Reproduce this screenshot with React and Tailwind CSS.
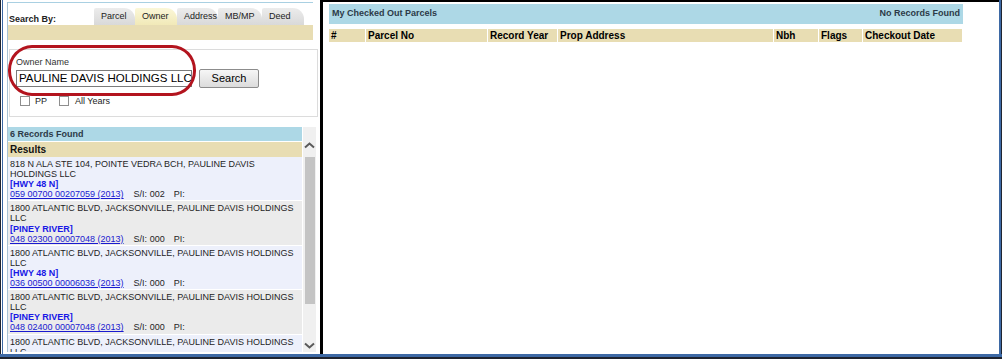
import React from 'react';

// Owner search results shown in the left list
const results = [
  {
    addr: '818 N ALA STE 104, POINTE VEDRA BCH, PAULINE DAVIS HOLDINGS LLC',
    area: '[HWY 48 N]',
    parcel: '059 00700 00207059 (2013)',
    si: '002',
  },
  {
    addr: '1800 ATLANTIC BLVD, JACKSONVILLE, PAULINE DAVIS HOLDINGS LLC',
    area: '[PINEY RIVER]',
    parcel: '048 02300 00007048 (2013)',
    si: '000',
  },
  {
    addr: '1800 ATLANTIC BLVD, JACKSONVILLE, PAULINE DAVIS HOLDINGS LLC',
    area: '[HWY 48 N]',
    parcel: '036 00500 00006036 (2013)',
    si: '000',
  },
  {
    addr: '1800 ATLANTIC BLVD, JACKSONVILLE, PAULINE DAVIS HOLDINGS LLC',
    area: '[PINEY RIVER]',
    parcel: '048 02400 00007048 (2013)',
    si: '000',
  },
  {
    addr: '1800 ATLANTIC BLVD, JACKSONVILLE, PAULINE DAVIS HOLDINGS LLC',
    area: '[HWY 48 N]',
    parcel: '036 00600 00006036 (2013)',
    si: '000',
  },
];

const tabs = [
  { label: 'Parcel', w: 'w-[41px]' },
  { label: 'Owner', w: 'w-[42px]', active: true },
  { label: 'Address', w: 'w-[41px]' },
  { label: 'MB/MP', w: 'w-[44px]' },
  { label: 'Deed', w: 'w-[42px]' },
];

const columns = [
  { label: '#', w: 'w-[36px]' },
  { label: 'Parcel No', w: 'w-[121px]' },
  { label: 'Record Year', w: 'w-[69px]' },
  { label: 'Prop Address', w: 'w-[215px]' },
  { label: 'Nbh', w: 'w-[44px]' },
  { label: 'Flags', w: 'w-[43px]' },
  { label: 'Checkout Date', w: 'w-[99px]' },
];

const Chevron = ({ down }) => (
  <svg width="11" height="7" viewBox="0 0 11 7" className="mx-auto">
    <path
      d={down ? 'M1 1.5 L5.5 5.5 L10 1.5' : 'M1 5.5 L5.5 1.5 L10 5.5'}
      fill="none"
      stroke="#5a5a5a"
      strokeWidth="2"
    />
  </svg>
);

export default function App() {
  return (
    <div className="w-[1002px] h-[359px] overflow-hidden bg-white flex flex-col font-['Liberation_Sans',Arial,sans-serif] text-[9px] text-[#1e1e1e]">
      <div className="flex h-[354px] shrink-0 overflow-hidden">
        {/* outer frame, left side */}
        <div className="w-px bg-[#1f2430]" />
        <div className="w-px bg-white" />
        <div className="w-px bg-[#3d69a5]" />

        {/* left search panel */}
        <div className="w-[317px] h-full pl-[4px] pt-[2px] pb-[2px] flex flex-col overflow-hidden">
          <div className="relative flex-1 min-h-0 flex flex-col border-l border-[#a7c2d4]">
            {/* Search By + tabs */}
            <div className="w-[305px] border-t border-[#a9d0e2]">
              <div className="h-[22px] flex items-end">
                <div className="w-[86px] pl-px pb-px leading-[10px] font-bold text-[#222]">Search By:</div>
                {tabs.map((t) => (
                  <div
                    key={t.label}
                    className={`${t.w} h-[17px] pl-[7px] pt-[3px] leading-[10px] rounded-tr-[11px] rounded-tl-[2px] ${
                      t.active
                        ? 'bg-gradient-to-b from-[#fbf7d8] to-[#f1e9b8] text-[#222]'
                        : 'bg-gradient-to-b from-[#ececec] to-[#d9d9d9] text-[#222]'
                    }`}
                  >
                    {t.label}
                  </div>
                ))}
              </div>
              <div className="h-[15px] bg-[#e8ddb3]" />
            </div>

            {/* owner name form */}
            <div className="ml-px mt-[9px] w-[309px] h-[68px] shrink-0 border border-[#dcdcdc] pl-[6px] pt-[7px]">
              <div className="leading-[10px] text-[#333]">Owner Name</div>
              <div className="mt-[2px] flex items-start">
                <div className="mt-px w-[176px] h-[17px] border border-[#7b7b7b] bg-white overflow-hidden whitespace-nowrap pl-[2px] text-[11.5px] leading-[15px] text-black">
                  PAULINE DAVIS HOLDINGS LLC
                </div>
                <div className="ml-[7px] w-[60px] h-[19px] border border-[#8c8c8c] rounded-[2px] bg-gradient-to-b from-[#f6f6f6] to-[#dcdcdc] text-[11px] leading-[17px] text-center text-black">
                  Search
                </div>
              </div>
              <div className="mt-[8px] flex items-center leading-[10px] text-[#222]">
                <div className="ml-[4px] w-[10px] h-[10px] border border-[#8e8e8e] bg-white" />
                <span className="ml-[5px]">PP</span>
                <div className="ml-[12px] w-[10px] h-[10px] border border-[#8e8e8e] bg-white" />
                <span className="ml-[6px]">All Years</span>
              </div>
            </div>

            {/* red annotation ring round the owner name */}
            <div className="absolute left-0 top-[43px] w-[188px] h-[51px] border-[3px] border-[#b3141e] rounded-[24px/25px]" />

            {/* results list */}
            <div className="mt-[10px] flex-1 min-h-0 flex overflow-hidden">
              <div className="w-[294px] flex flex-col overflow-hidden">
                <div className="h-[14px] shrink-0 bg-[#add8e6] pl-[2px] pt-[2px] leading-[10px] font-bold text-[#2c3a48]">
                  6 Records Found
                </div>
                <div className="mt-px h-[15px] shrink-0 bg-[#e8ddb3] pl-[2px] pt-[2px] leading-[11px] text-[10px] font-bold text-[#111]">
                  Results
                </div>
                {results.map((r, i) => (
                  <div
                    key={i}
                    className={`shrink-0 pl-[2px] pt-[2px] pb-px border-b border-white leading-[10.1px] ${
                      i % 2 === 0 ? 'bg-[#edf0fb]' : 'bg-[#ebebeb]'
                    }`}
                  >
                    <div>{r.addr}</div>
                    <div className="font-bold text-[#1818e6]">{r.area}</div>
                    <div className="whitespace-nowrap">
                      <span className="underline text-[#1a1ad0]">{r.parcel}</span>
                      <span className="ml-[10px]">S/I: {r.si}</span>
                      <span className="ml-[9px]">PI:</span>
                    </div>
                  </div>
                ))}
              </div>

              {/* scrollbar */}
              <div className="ml-px w-[13px] bg-[#f0f0f0] flex flex-col">
                <div className="pt-[15px]">
                  <Chevron />
                </div>
                <div className="mt-[8px] mx-auto w-[10px] h-[147px] bg-[#c4c4c4]" />
                <div className="flex-1" />
                <div className="pb-[3px]">
                  <Chevron down />
                </div>
              </div>
            </div>
          </div>
        </div>

        {/* divider */}
        <div className="w-[3px] bg-black" />

        {/* right panel: checked out parcels */}
        <div className="w-[676px] border-t-2 border-black pl-[6px] pt-[2px]">
          <div className="w-[634px] h-[20px] bg-[#add8e6] flex items-center justify-between px-[3px] font-bold text-[#2c3a48]">
            <span>My Checked Out Parcels</span>
            <span>No Records Found</span>
          </div>
          <div className="mt-[5px] flex gap-px">
            {columns.map((c) => (
              <div
                key={c.label}
                className={`${c.w} h-[13px] bg-[#e8ddb3] pl-[2px] pt-px leading-[11px] text-[10px] font-bold text-black`}
              >
                {c.label}
              </div>
            ))}
          </div>
        </div>

        {/* outer frame, right side */}
        <div className="w-[2px] bg-[#3d69a5]" />
        <div className="w-px bg-[#1f2430]" />
      </div>
      <div className="h-[3px] shrink-0 bg-[#3d69a5]" />
      <div className="h-[2px] shrink-0 bg-[#1f2430]" />
    </div>
  );
}
